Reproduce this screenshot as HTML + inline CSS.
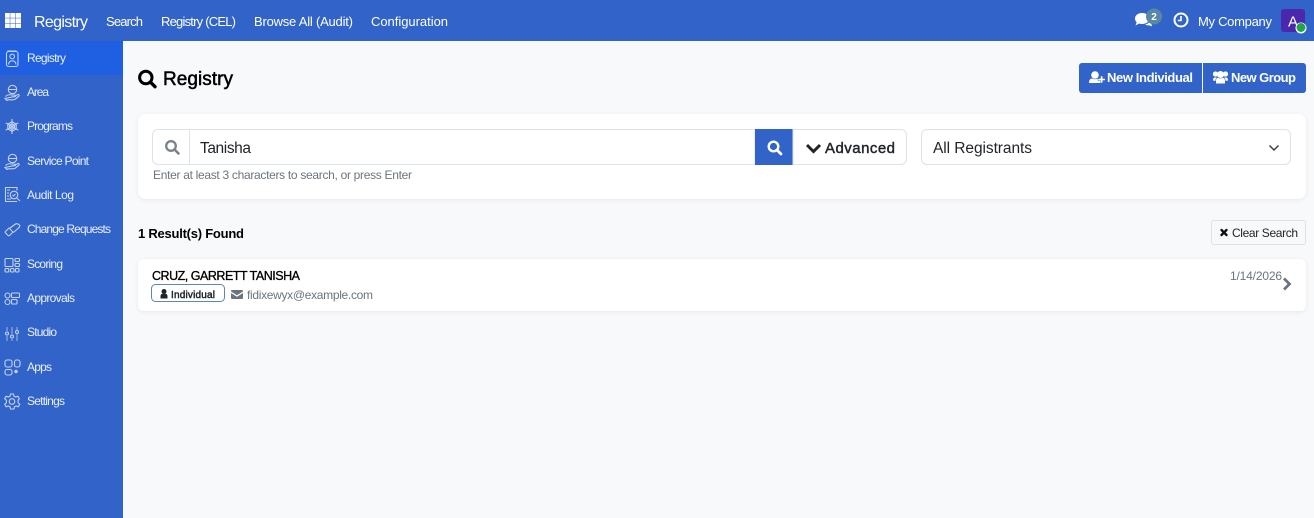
<!DOCTYPE html>
<html><head><meta charset="utf-8"><style>
html,body{margin:0;padding:0;width:1314px;height:518px;overflow:hidden;background:#f8f9fb}
svg{display:block}
text{font-family:"Liberation Sans",sans-serif}
.t{fill:#fff;font-size:13px}
.s{fill:#e8efff;font-size:12px}
.i{fill:none;stroke:#c3d3f3;stroke-width:1.1}
.m{stroke-width:.3px;stroke:currentColor}
</style></head><body>
<svg width="1314" height="518" viewBox="0 0 1314 518" xmlns="http://www.w3.org/2000/svg">
<defs>
<filter id="sh" x="-2%" y="-20%" width="104%" height="140%"><feDropShadow dx="0" dy="1" stdDeviation="2" flood-color="#000" flood-opacity=".07"/></filter>
<g id="hand"><circle cx="12.500" cy="0" r="4.200"/><path d="M8.500 0h8M5.500 7c2-2 4-2 6-1.500h3c1.300 0 1.300 1.800 0 1.800h-2.500M14.500 7l3-1.800c1.300-.7 2.200.5 1.300 1.500l-3.500 3c-.8.5-1.500.6-2.500.6H8l-1 .7L5 9Z"/></g>
</defs>
<rect width="1314" height="518" fill="#f8f9fb"/>
<rect width="1314" height="41" fill="#3163c8"/>
<rect y="41" width="123" height="477" fill="#3163c8"/>
<rect y="41" width="123" height="34" fill="#1f60e2"/>

<!-- grid icon -->
<g fill="#fff"><rect x="5" y="13" width="4.800" height="4.800"/><rect x="10.300" y="13" width="4.800" height="4.800"/><rect x="15.600" y="13" width="5.400" height="4.800"/><rect x="5" y="18.300" width="4.800" height="4.800"/><rect x="10.300" y="18.300" width="4.800" height="4.800"/><rect x="15.600" y="18.300" width="5.400" height="4.800"/><rect x="5" y="23.600" width="4.800" height="4.400"/><rect x="10.300" y="23.600" width="4.800" height="4.400"/><rect x="15.600" y="23.600" width="5.400" height="4.400"/></g>
<text x="34" y="27" fill="#fff" font-size="16" textLength="54">Registry</text>
<text class="t" x="106" y="26" textLength="37">Search</text>
<text class="t" x="161" y="26" textLength="75">Registry (CEL)</text>
<text class="t" x="254" y="26" textLength="99">Browse All (Audit)</text>
<text class="t" x="371" y="26" textLength="77">Configuration</text>

<!-- top right -->
<path d="M1142 13c4.200 0 7.500 2.300 7.500 5.500s-3.300 5.500-7.500 5.500c-1 0-2.200-.1-3-.4L1135.500 25.500l1.200-3.200c-1.100-.9-1.700-2.300-1.700-3.800 0-3.200 3.200-5.500 7-5.500Z" fill="#fff"/>
<path d="M1150.500 19c2 1 2.500 3.700 .8 5.300l1 2.200-3.200-1.300c-1.500.3-3 0-4-.7 3-.3 5.200-2.600 5.400-5.500Z" fill="#fff"/>
<circle cx="1154" cy="16.500" r="8" fill="#5a87a3"/>
<text x="1154" y="20" fill="#fff" font-size="10" font-weight="bold" text-anchor="middle">2</text>
<circle cx="1181" cy="20" r="6.500" fill="none" stroke="#fff" stroke-width="2"/>
<path d="M1181 16v4.500h-3.200" fill="none" stroke="#fff" stroke-width="1.600"/>
<text class="t" x="1198" y="26" textLength="74">My Company</text>
<rect x="1281" y="9" width="24" height="23" rx="3" fill="#4b27ad"/>
<text x="1293" y="26.500" fill="#fff" font-size="15" text-anchor="middle">A</text>
<circle cx="1301" cy="28" r="5.500" fill="#fff"/>
<circle cx="1301" cy="27.500" r="4.500" fill="#22a54a"/>

<!-- sidebar text -->
<text class="s" x="27" y="62" textLength="39">Registry</text>
<text class="s" x="27" y="96" textLength="22">Area</text>
<text class="s" x="27" y="130" textLength="46">Programs</text>
<text class="s" x="27" y="165" textLength="62">Service Point</text>
<text class="s" x="27" y="199" textLength="47">Audit Log</text>
<text class="s" x="27" y="233" textLength="84">Change Requests</text>
<text class="s" x="27" y="268" textLength="36">Scoring</text>
<text class="s" x="27" y="302" textLength="48">Approvals</text>
<text class="s" x="27" y="336" textLength="30">Studio</text>
<text class="s" x="27" y="371" textLength="25">Apps</text>
<text class="s" x="27" y="405" textLength="38">Settings</text>

<!-- sidebar icons -->
<g class="i">
<rect x="6.500" y="51.500" width="11.500" height="15" rx="2"/><path d="M8 51.500v-.5h8.500"/><circle cx="12.200" cy="56.500" r="2.300"/><path d="M8.500 64.500c0-5 7.500-5 7.500 0"/>
<use href="#hand" y="89.500"/>
<g transform="translate(12 126.500)"><circle r="2.600"/><path d="M0-4.800 4.200-2.400V2.400L0 4.800-4.200 2.400V-2.400Z"/><path d="M0-7.500V7.500M-6.300-3.700 6.300 3.700M-6.300 3.700 6.300-3.700"/></g>
<use href="#hand" y="158.500"/>
<path d="M17 201.500H5.500v-14H17v3"/><path d="M7 190h3M7 193h2M7 196h2M7 199h4"/><circle cx="14" cy="195" r="3.800"/><path d="M16.800 198l3.200 3"/><path d="M12.500 195l1 1 2-2"/>
<path d="M10 228l5.500-4c1.800-1 3.500 .5 4 1.200 .5 .8 .3 1.500-.5 2.300l-5.500 5"/><path d="M5.500 231.500l3.500-3.500 4 4-3.500 3.500a1 1 0 0 1-1.400 0l-2.600-2.600a1 1 0 0 1 0-1.400Z"/>
<rect x="5" y="258.500" width="8" height="8" rx="1"/><rect x="15" y="258.500" width="4.500" height="3" rx="1"/><rect x="15" y="263.500" width="4.500" height="3" rx="1"/><rect x="5" y="268.500" width="3.800" height="3.500" rx="1"/><rect x="10.500" y="268.500" width="3.500" height="3.500" rx="1"/><rect x="15.500" y="268.500" width="3.500" height="3.500" rx="1"/>
<circle cx="7.500" cy="295.500" r="2.500"/><circle cx="7.500" cy="302" r="2.500"/><rect x="11.500" y="293" width="8" height="4.500" rx="1"/><rect x="11.500" y="299.500" width="5.500" height="4.500" rx="1"/>
<path d="M7 327v4M7 336v5M12 327v7M12 339v2M17 327v3M17 334v7" opacity=".7"/><circle cx="7" cy="333.500" r="1.500"/><circle cx="12" cy="336.500" r="1.500"/><circle cx="17" cy="332" r="1.500"/>
<rect x="5" y="360" width="7" height="7" rx="2"/><rect x="14.500" y="360" width="5.500" height="7" rx="2"/><rect x="5" y="369.500" width="7" height="5.500" rx="2"/><circle cx="16" cy="371.500" r="1.200" fill="#c3d3f3"/>
<g transform="translate(12 401.500)"><circle r="2.800"/><path d="M-1.500-7.500h3l.5 2.200 1.600.8 2.200-.8 1.500 2.600L6.100-1.300v2.600l1.700 1.400L6.300 5.300 4.100 4.500l-1.600.8L2 7.500h-3.500l-.5-2.200-1.600-.8-2.200.8L-7.300 2.700-5.600 1.300V-1.300L-7.300-2.700-5.800-5.300l2.200.8 1.600-.8Z"/></g>
</g>

<!-- title -->
<circle cx="145.800" cy="77.500" r="6.200" fill="none" stroke="#000" stroke-width="3"/>
<path d="M150.500 82.200l4.500 4.500" stroke="#000" stroke-width="3.400" stroke-linecap="round"/>
<text x="163" y="85" fill="#000" font-size="19" textLength="70" class="m" color="#000" style="font-weight:400;stroke-width:.5px">Registry</text>

<!-- top buttons -->
<path d="M1082 63h120v30h-120a3 3 0 0 1-3-3V66a3 3 0 0 1 3-3Z" fill="#3163c8"/>
<path d="M1203 63h100a3 3 0 0 1 3 3v24a3 3 0 0 1-3 3h-100Z" fill="#3163c8"/>
<g fill="#fff">
<circle cx="1095" cy="75" r="3.800"/><path d="M1089 83c0-4 2-4.500 3-4.500 2 1 4 1 6 0 1 0 2 .5 2.500 2V83Z"/><path d="M1100.500 76h2.200v2.500h2.500v2h-2.500V83h-2.200v-2.500H1098v-2h2.500Z" stroke="#3163c8" stroke-width=".5"/>
<circle cx="1220.500" cy="74.500" r="3.500"/><circle cx="1215.500" cy="74" r="2.600"/><circle cx="1225.500" cy="74" r="2.600"/><path d="M1216 83.500v-3c0-2 1.500-2.800 2-2.800 1.500 .8 3.500 .8 5 0 .5 0 2 .8 2 2.800v3Z"/><path d="M1213 80.500c0-2 .7-3 1.700-3h2.300c-1 .6-1.500 1.500-1.600 3.500ZM1228 80.500c0-2-.7-3-1.700-3H1224c1 .6 1.500 1.500 1.600 3.500Z"/>
</g>
<text x="1107" y="82" fill="#fff" font-size="13" font-weight="bold" textLength="86">New Individual</text>
<text x="1231" y="82" fill="#fff" font-size="13" font-weight="bold" textLength="65">New Group</text>

<!-- search card -->
<rect x="138" y="114" width="1168" height="85" rx="8" fill="#fff" filter="url(#sh)"/>
<path d="M158 129.500H755v35H158a5.500 5.500 0 0 1-5.500-5.500v-24a5.500 5.500 0 0 1 5.500-5.500Z" fill="#fff" stroke="#dfe2e8"/>
<path d="M189.500 130v34" stroke="#dfe2e8"/>
<circle cx="171" cy="146" r="4.800" fill="none" stroke="#7a8188" stroke-width="2.300"/>
<path d="M174.500 149.500l4 4" stroke="#7a8188" stroke-width="2.600" stroke-linecap="round"/>
<text x="200" y="153" fill="#212529" font-size="15.500" textLength="51">Tanisha</text>
<rect x="755" y="129" width="38" height="36" fill="#3163c8"/>
<circle cx="773.500" cy="146.500" r="4.800" fill="none" stroke="#fff" stroke-width="2.400"/>
<path d="M777 150l4 4" stroke="#fff" stroke-width="2.700" stroke-linecap="round"/>
<path d="M793 129.500h108a5.500 5.500 0 0 1 5.500 5.500v24a5.500 5.500 0 0 1-5.500 5.500H793Z" fill="#fff" stroke="#dfe2e8"/>
<path d="M807 145l6.500 6.500 6.500-6.500" fill="none" stroke="#212529" stroke-width="3"/>
<text x="825" y="153" fill="#212529" font-size="15" textLength="70" class="m" color="#212529" style="stroke-width:.45px">Advanced</text>
<rect x="921.500" y="129.500" width="369" height="35" rx="5.500" fill="#fff" stroke="#dfe2e8"/>
<text x="933" y="153" fill="#212529" font-size="15.500" textLength="99">All Registrants</text>
<path d="M1269.500 145.500l4.500 4.500 4.500-4.500" fill="none" stroke="#343a40" stroke-width="1.400"/>
<text x="153" y="179" fill="#6c757d" font-size="12" textLength="259">Enter at least 3 characters to search, or press Enter</text>

<!-- results header -->
<text x="138" y="238" fill="#000" font-size="13" textLength="106" font-weight="bold">1 Result(s) Found</text>
<rect x="1211.500" y="220.500" width="94" height="24" rx="2.500" fill="#f8f9fb" stroke="#dee2e6"/>
<path d="M1221.500 230l5 5M1226.500 230l-5 5" stroke="#111" stroke-width="2.400" stroke-linecap="round"/>
<text x="1232" y="237" fill="#212529" font-size="12" textLength="66">Clear Search</text>

<!-- result -->
<rect x="138" y="259" width="1168" height="52" rx="6" fill="#fff" filter="url(#sh)"/>
<text x="152" y="280" fill="#000" font-size="12.500" textLength="148" class="m" color="#000">CRUZ, GARRETT TANISHA</text>
<rect x="151.500" y="284.500" width="73" height="17" rx="4" fill="#fff" stroke="#5f88a6"/>
<circle cx="164" cy="291.500" r="2.500" fill="#212529"/>
<path d="M160.500 298.500v-2.200c0-1.700 1-2.500 2-2.500h3c1 0 2 .8 2 2.500v2.200Z" fill="#212529"/>
<text x="171" y="298" fill="#212529" font-size="10" textLength="44" class="m" color="#212529" style="stroke-width:.45px">Individual</text>
<path d="M232 290h10a1 1 0 0 1 1 1v.5l-6 3.700-6-3.700V291a1 1 0 0 1 1-1Z" fill="#6c757d"/>
<path d="M231 293l6 3.700 6-3.700v5a1 1 0 0 1-1 1h-10a1 1 0 0 1-1-1Z" fill="#6c757d"/>
<text x="247" y="299" fill="#6c757d" font-size="12" textLength="126">fidixewyx@example.com</text>
<text x="1230" y="280" fill="#6c757d" font-size="12" textLength="52">1/14/2026</text>
<path d="M1284 278.500l5.500 5.500-5.500 5.500" fill="none" stroke="#6c757d" stroke-width="2.800"/>
</svg>
</body></html>
